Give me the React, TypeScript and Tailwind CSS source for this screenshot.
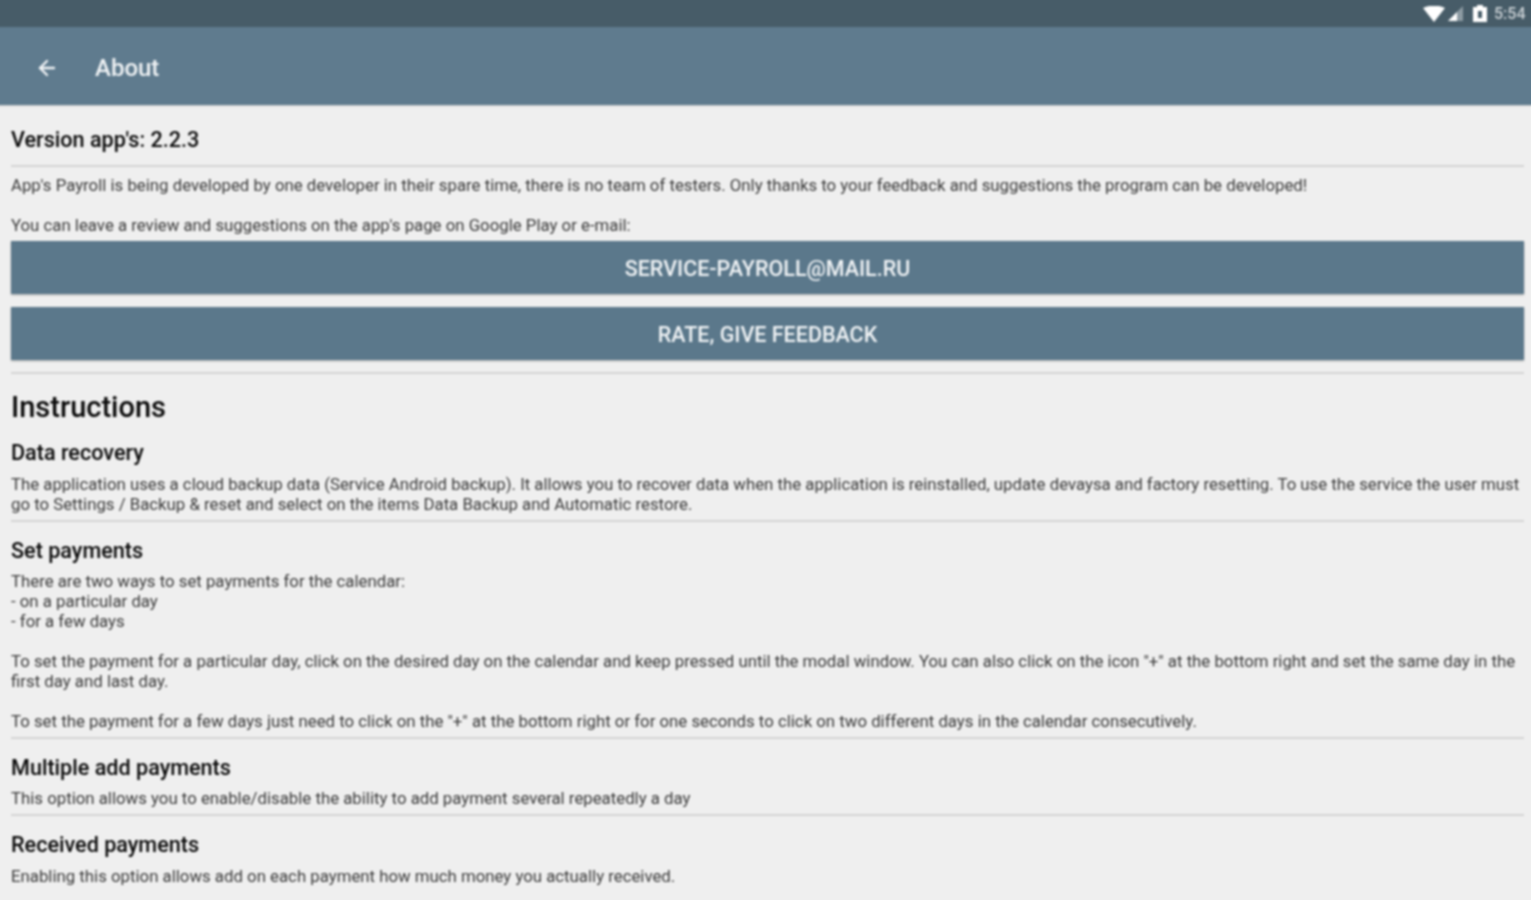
import { ArrowLeft } from "lucide-react";

function Divider({ className = "" }: { className?: string }) {
  return <div className={`h-[2px] bg-[#d4d4d4] ${className}`} />;
}

function Heading({ children, className = "" }: { children: string; className?: string }) {
  return <h3 className={`text-[21.6px] leading-[28px] font-medium text-[#0a0a0a] ${className}`}>{children}</h3>;
}

function Body({ children, className = "" }: { children: React.ReactNode; className?: string }) {
  return <p className={`text-[16.8px] leading-[20px] text-[#3a3a3a] ${className}`}>{children}</p>;
}

function ActionButton({ children }: { children: string }) {
  return (
    <button className="h-[53px] w-full bg-[#5b788b] pt-[4px] text-[21.5px] font-medium text-[#f0f3f5] shadow-[0_1px_2px_rgba(0,0,0,0.3)]">
      {children}
    </button>
  );
}

function StatusBar() {
  return (
    <div className="flex h-[31px] items-center justify-end bg-[#475c68] pr-[8px] pt-[4px]">
      <svg width="22" height="16" viewBox="0 0 22 16">
        <path d="M0 2 Q11 -3 22 2 L11 16 Z" fill="#ffffff" />
      </svg>
      <svg width="15" height="15" viewBox="0 0 15 15" className="ml-[3px]">
        <path d="M15 0 V15 H0 Z" fill="#8d9ba3" />
        <path d="M9 6 V15 H0 Z" fill="#ffffff" />
      </svg>
      <svg width="14" height="17" viewBox="0 0 14 17" className="ml-[10px]">
        <path d="M4 0 H10 V2 H14 V17 H0 V2 H4 Z" fill="#ffffff" />
        <rect x="5" y="6" width="4" height="7" fill="#475c68" />
      </svg>
      <span className="ml-[7px] w-[33px] text-[16px] font-medium text-[#c9d0d4]">5:54</span>
    </div>
  );
}

export default function App() {
  return (
    <div className="h-[900px] overflow-hidden bg-[#efefef]">
      {/* bleeds 4px past the window so the blur doesn't fade at the edges */}
      <div className="-mx-[4px] -mt-[4px] h-[908px] bg-[#efefef] font-['Roboto',sans-serif] blur-[0.8px]">
        <StatusBar />
        <header className="flex h-[78px] items-center bg-[#5f7b8e] pl-[39px] pt-[4px] text-[#f0f3f5] shadow-[0_1px_1px_rgba(0,0,0,0.15)]">
          <ArrowLeft size={24} strokeWidth={2.4} />
          <span className="ml-[36px] text-[24px] font-medium">About</span>
        </header>

        <main className="pl-[15px] pr-[11px] pt-[21px]">
          <h2 className="text-[21.6px] leading-[28px] font-medium text-[#0a0a0a]">Version app's: 2.2.3</h2>
          <Divider className="mt-[11px]" />
          <Body className="mt-[8px]">
            App's Payroll is being developed by one developer in their spare time, there is no team of testers. Only thanks to your feedback and suggestions the program can be developed!
          </Body>
          <Body className="mt-[20px]">You can leave a review and suggestions on the app's page on Google Play or e-mail:</Body>
          <div className="mt-[6px] flex flex-col gap-[13px]">
            <ActionButton>SERVICE-PAYROLL@MAIL.RU</ActionButton>
            <ActionButton>RATE, GIVE FEEDBACK</ActionButton>
          </div>
          <Divider className="mt-[12px]" />

          <h2 className="mt-[15px] text-[29px] leading-[36px] font-medium text-[#0a0a0a]">Instructions</h2>
          <Heading className="mt-[14px]">Data recovery</Heading>
          <Body className="mt-[7px]">
            The application uses a cloud backup data (Service Android backup). It allows you to recover data when the application is reinstalled, update devaysa and factory resetting. To use the service the user must go to Settings / Backup &amp; reset and select on the items Data Backup and Automatic restore.
          </Body>
          <Divider className="mt-[6px]" />

          <Heading className="mt-[15px]">Set payments</Heading>
          <Body className="mt-[6px]">
            There are two ways to set payments for the calendar:
            <br />- on a particular day
            <br />- for a few days
          </Body>
          <Body className="mt-[20px]">
            To set the payment for a particular day, click on the desired day on the calendar and keep pressed until the modal window. You can also click on the icon "+" at the bottom right and set the same day in the first day and last day.
          </Body>
          <Body className="mt-[20px]">
            To set the payment for a few days just need to click on the "+" at the bottom right or for one seconds to click on two different days in the calendar consecutively.
          </Body>
          <Divider className="mt-[6px]" />

          <Heading className="mt-[15px]">Multiple add payments</Heading>
          <Body className="mt-[6px]">This option allows you to enable/disable the ability to add payment several repeatedly a day</Body>
          <Divider className="mt-[6px]" />

          <Heading className="mt-[15px]">Received payments</Heading>
          <Body className="mt-[7px]">Enabling this option allows add on each payment how much money you actually received.</Body>
        </main>
      </div>
    </div>
  );
}
